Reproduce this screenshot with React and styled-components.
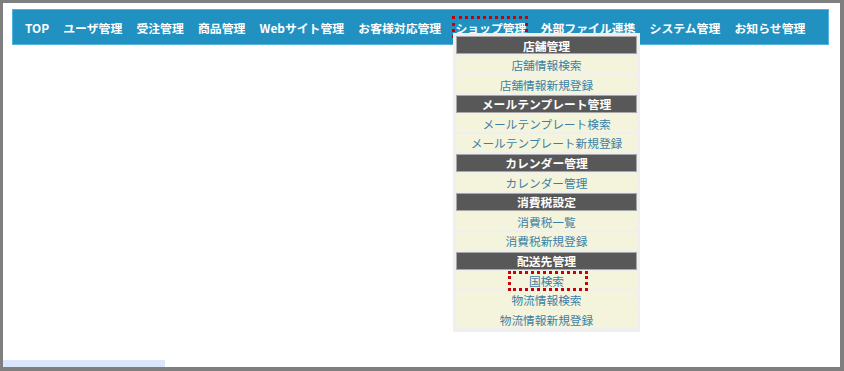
import React from "react";
import styled, { createGlobalStyle } from "styled-components";

const Global = createGlobalStyle`
  html, body { margin: 0; padding: 0; background: #fff; }
  body { font-family: "Noto Sans CJK JP", "Noto Sans", sans-serif; }
`;

const Frame = styled.div`
  position: relative;
  box-sizing: border-box;
  width: 844px;
  height: 371px;
  background: #fff;
  border-style: solid;
  border-color: #7f7f7f;
  border-width: 3px 4px 4px 3px;
  padding: 6px 11px 0 9px;
  overflow: hidden;
`;

const NavBar = styled.nav`
  box-sizing: border-box;
  height: 36px;
  background: #2191c1;
  border: 1px solid #52b3de;
  display: flex;
  align-items: center;
  gap: 14.2px;
  padding: 0 0 0 12px;
`;

const NavItem = styled.span`
  position: relative;
  color: #fff;
  font-weight: bold;
  font-size: 11.85px;
  line-height: 17px;
  white-space: nowrap;
  &::after {
    content: "";
    display: ${(p) => (p.$marked ? "block" : "none")};
    position: absolute;
    left: -3px;
    right: -2px;
    top: -3px;
    bottom: -2px;
    border: 3px dotted #c8000a;
  }
`;

const Dropdown = styled.div`
  position: absolute;
  left: 450px;
  top: 30px;
  width: 187px;
  box-sizing: border-box;
  background: #efefef;
  padding: 3px 3px 4px 3px;
  display: grid;
  grid-auto-rows: 18px;
  row-gap: 1.6px;
`;

const Header = styled.div`
  box-sizing: border-box;
  background: #585858;
  border: 1px solid #a8a8a8;
  color: #fff;
  font-weight: bold;
  font-size: 11.8px;
  display: flex;
  align-items: center;
  justify-content: center;
  white-space: nowrap;
`;

const Item = styled.div`
  position: relative;
  background: #f4f4dc;
  color: #3c7fa6;
  font-size: 11.7px;
  display: flex;
  align-items: center;
  justify-content: center;
  white-space: nowrap;
  &::after {
    content: "";
    display: ${(p) => (p.$marked ? "block" : "none")};
    position: absolute;
    left: 52px;
    width: 74px;
    top: 0px;
    height: 14px;
    border: 3px dotted #c8000a;
  }
`;

const StatusTip = styled.div`
  position: absolute;
  left: 0;
  bottom: 0;
  width: 162px;
  height: 7px;
  background: #dbe7fb;
`;

const navItems = [
  "TOP",
  "ユーザ管理",
  "受注管理",
  "商品管理",
  "Webサイト管理",
  "お客様対応管理",
  "ショップ管理",
  "外部ファイル連携",
  "システム管理",
  "お知らせ管理",
];

const menu = [
  { h: "店舗管理", items: ["店舗情報検索", "店舗情報新規登録"] },
  { h: "メールテンプレート管理", items: ["メールテンプレート検索", "メールテンプレート新規登録"] },
  { h: "カレンダー管理", items: ["カレンダー管理"] },
  { h: "消費税設定", items: ["消費税一覧", "消費税新規登録"] },
  { h: "配送先管理", items: ["国検索", "物流情報検索", "物流情報新規登録"] },
];

export default function App() {
  return (
    <>
      <Global />
      <Frame>
        <NavBar>
          {navItems.map((n) => (
            <NavItem key={n} $marked={n === "ショップ管理"}>
              {n}
            </NavItem>
          ))}
        </NavBar>
        <Dropdown>
          {menu.map((g) => (
            <React.Fragment key={g.h}>
              <Header>{g.h}</Header>
              {g.items.map((i) => (
                <Item key={i} $marked={i === "国検索"}>
                  {i}
                </Item>
              ))}
            </React.Fragment>
          ))}
        </Dropdown>
        <StatusTip />
      </Frame>
    </>
  );
}
